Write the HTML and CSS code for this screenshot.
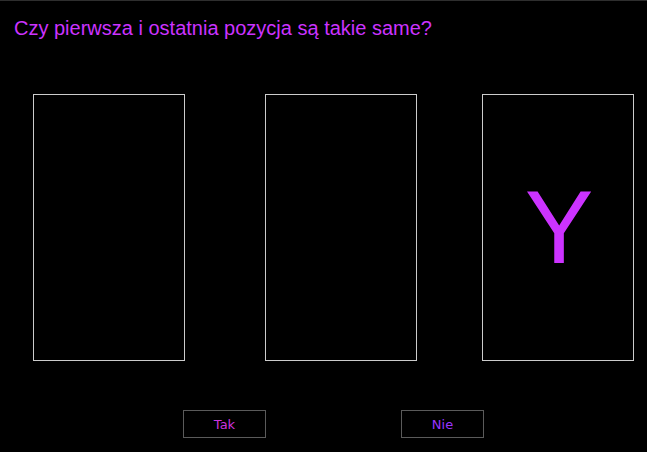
FILE: index.html
```html
<!DOCTYPE html>
<html lang="pl">
<head>
<meta charset="utf-8">
<title>Quiz</title>
<link rel="stylesheet" href="styles.css">
</head>
<body>
<div class="app">
  <h1 class="title">Czy pierwsza i ostatnia pozycja są takie same?</h1>
  <div class="cards">
    <div class="card"></div>
    <div class="card card-mid"></div>
    <div class="card card-last"><span class="letter">Y</span></div>
  </div>
  <div class="actions">
    <button class="btn btn-yes">Tak</button>
    <button class="btn btn-no">Nie</button>
  </div>
</div>
</body>
</html>
```

FILE: styles.css
```css
html, body {
  margin: 0;
  padding: 0;
  background: #000;
}
.app {
  width: 647px;
  height: 452px;
  box-sizing: border-box;
  border-top: 1px solid #2e2e2e;
  overflow: hidden;
}
.title {
  margin: 0;
  padding: 17px 0 0 14px;
  font-family: "Liberation Sans", Arial, sans-serif;
  font-weight: normal;
  font-size: 20px;
  line-height: 20px;
  color: #cc33ff;
}
.cards {
  display: flex;
  margin-top: 56px;
  padding-left: 33px;
}
.card {
  width: 150px;
  height: 265px;
  border: 1px solid #cccccc;
  display: flex;
  align-items: center;
  justify-content: center;
}
.card-mid {
  margin-left: 80px;
}
.card-last {
  margin-left: 65px;
}
.letter {
  font-family: "Liberation Sans", Arial, sans-serif;
  font-size: 103px;
  line-height: 1;
  color: #cc33ff;
  padding-left: 2px;
}
.actions {
  display: flex;
  gap: 135px;
  margin-top: 49px;
  padding-left: 183px;
}
.btn {
  width: 83px;
  height: 28px;
  box-sizing: border-box;
  border: 1px solid #5a5a5a;
  background: #000;
  font-family: "DejaVu Sans", sans-serif;
  font-size: 13px;
  padding: 0;
  border-radius: 0;
}
.btn-yes {
  color: #cc33dd;
}
.btn-no {
  color: #9933ff;
}
```
